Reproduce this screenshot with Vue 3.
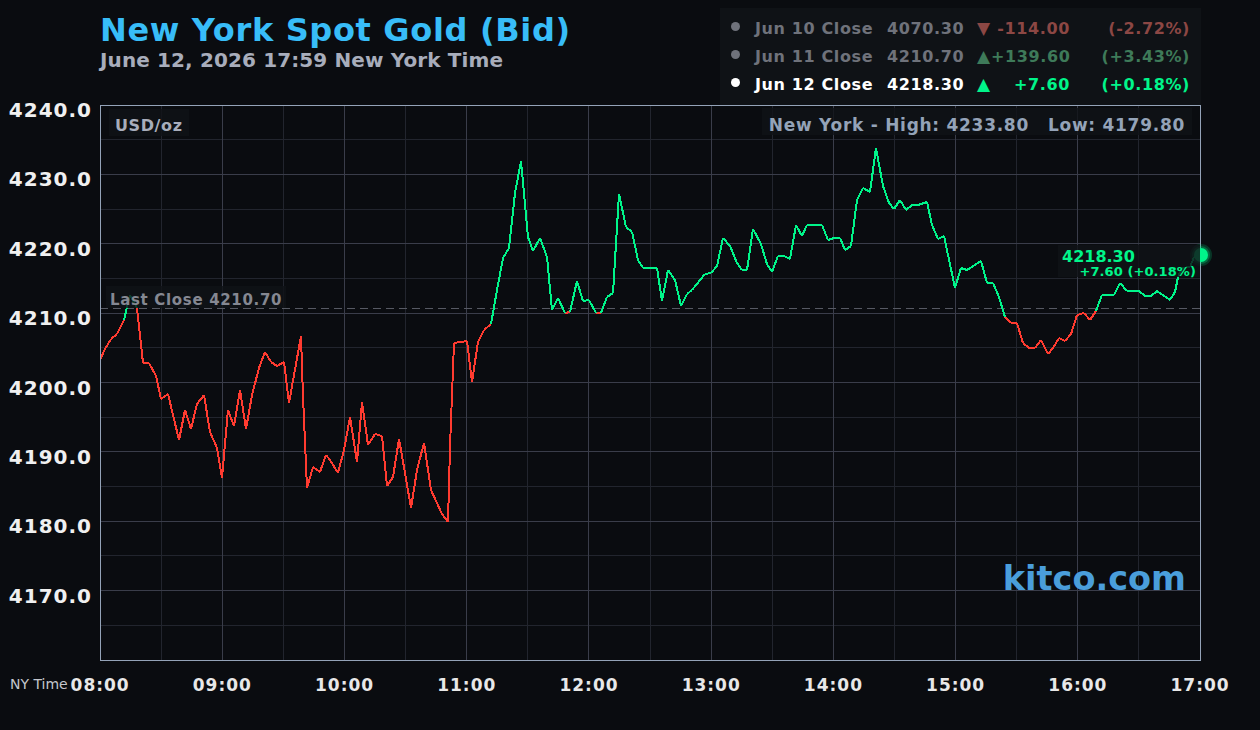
<template>
  <div class="page">
    <header class="head">
      <div class="titles">
        <h1>New York Spot Gold (Bid)</h1>
        <p>June 12, 2026 17:59 New York Time</p>
      </div>
      <div class="legend">
        <div v-for="row in closes" :key="row.day" class="legend-row" :class="{ current: row.current }">
          <i class="dot"></i>
          <span class="day">{{ row.day }} Close</span>
          <span class="price">{{ row.price }}</span>
          <span class="arrow" :class="row.up ? 'up' : 'down'">{{ row.up ? '▲' : '▼' }}</span>
          <span class="change" :class="row.up ? 'up' : 'down'">{{ row.change }}</span>
          <span class="pct" :class="row.up ? 'up' : 'down'">{{ row.pct }}</span>
        </div>
      </div>
    </header>

    <main class="chart">
      <div class="y-axis">
        <span v-for="t in yTicks" :key="t">{{ t }}</span>
      </div>
      <div class="plot">
        <svg class="canvas" viewBox="100 105 1101 556" width="1101" height="556">
          <line v-for="x in minorX" :key="'mx' + x" :x1="x" :x2="x" y1="105" y2="660" class="minor" />
          <line v-for="y in minorY" :key="'my' + y" x1="100" x2="1200" :y1="y" :y2="y" class="minor" />
          <line v-for="x in majorX" :key="'jx' + x" :x1="x" :x2="x" y1="105" y2="660" class="major" />
          <line v-for="y in majorY" :key="'jy' + y" x1="100" x2="1200" :y1="y" :y2="y" class="major" />
          <line x1="100" x2="1200" y1="308.5" y2="308.5" class="close-line" />
          <path :d="redPath" class="trace red" />
          <path :d="greenPath" class="trace green" />
          <rect x="100.5" y="105.5" width="1100" height="555" class="frame" />
        </svg>
        <span class="tag unit">USD/oz</span>
        <div class="tag range">
          <span>New York - High: 4233.80</span>
          <span>Low: 4179.80</span>
        </div>
        <span class="tag last">Last Close 4210.70</span>
        <svg class="marker" viewBox="0 0 24 24" width="24" height="24">
          <circle cx="12" cy="12" r="11" fill="#00f58a" opacity="0.18" />
          <circle cx="12" cy="12" r="9" fill="#00f58a" opacity="0.28" />
          <circle cx="12" cy="12" r="7" fill="#00f58a" />
        </svg>
        <div class="now">
          <b>4218.30</b>
          <small>+7.60 (+0.18%)</small>
        </div>
        <span class="brand">kitco.com</span>
      </div>
    </main>

    <footer class="x-axis">
      <span class="ny">NY Time</span>
      <span v-for="t in xTicks" :key="t">{{ t }}</span>
    </footer>
  </div>
</template>

<script setup>
import { computed } from 'vue'

const closes = [
  { day: 'Jun 10', price: '4070.30', change: '-114.00', pct: '(-2.72%)', up: false },
  { day: 'Jun 11', price: '4210.70', change: '+139.60', pct: '(+3.43%)', up: true },
  { day: 'Jun 12', price: '4218.30', change: '+7.60', pct: '(+0.18%)', up: true, current: true }
]

const yTicks = ['4240.0', '4230.0', '4220.0', '4210.0', '4200.0', '4190.0', '4180.0', '4170.0']
const xTicks = ['08:00', '09:00', '10:00', '11:00', '12:00', '13:00', '14:00', '15:00', '16:00', '17:00']

const hour = 1100 / 9
const priceStep = 555 / 16
const majorX = Array.from({ length: 8 }, (_, i) => Math.floor(100 + hour * (i + 1)) + 0.5)
const minorX = Array.from({ length: 9 }, (_, i) => Math.floor(100 + hour * (i + 0.5)) + 0.5)
const majorY = Array.from({ length: 7 }, (_, i) => Math.floor(105 + priceStep * (2 * i + 2)) + 0.5)
const minorY = Array.from({ length: 8 }, (_, i) => Math.floor(105 + priceStep * (2 * i + 1)) + 0.5)

// traced in page pixels, the chart viewBox uses the same numbers
const trace = [
  [100, 360], [105, 349], [111, 339], [117, 334], [124, 320], [127, 307], [130, 295], [137, 308],
  [143, 363], [149, 363], [156, 376], [161, 399], [168, 394], [179, 440], [185, 410], [191, 429],
  [197, 404], [204, 395], [210, 432], [217, 448], [222, 478], [228, 410], [234, 426], [240, 390],
  [246, 429], [252, 395], [259, 368], [265, 352], [271, 362], [277, 366], [284, 362], [289, 403],
  [301, 336], [303, 396], [307, 488], [313, 467], [320, 472], [326, 455], [330, 460], [338, 473],
  [344, 450], [350, 417], [357, 462], [362, 402], [368, 445], [375, 434], [382, 436], [387, 486],
  [393, 477], [399, 439], [405, 473], [411, 508], [417, 470], [424, 443], [431, 490], [442, 514],
  [448, 522], [450, 447], [454, 343], [467, 341], [472, 382], [478, 342], [484, 330], [491, 324],
  [497, 290], [503, 258], [509, 248], [515, 193], [521, 161], [528, 237], [533, 251], [540, 238],
  [547, 257], [552, 310], [558, 298], [565, 313], [570, 312], [577, 281], [583, 301], [589, 300],
  [596, 313], [601, 313], [607, 297], [613, 293], [619, 194], [626, 227], [632, 232], [638, 260],
  [643, 268], [657, 268], [662, 301], [668, 270], [675, 280], [681, 306], [687, 294], [692, 290],
  [705, 274], [711, 273], [717, 266], [723, 238], [730, 246], [737, 263], [742, 270], [747, 270],
  [753, 229], [761, 244], [767, 264], [772, 272], [778, 256], [784, 256], [790, 259], [796, 225],
  [802, 236], [807, 225], [822, 225], [828, 240], [834, 238], [840, 238], [845, 250], [851, 246],
  [857, 200], [863, 188], [870, 192], [876, 148], [883, 186], [889, 203], [894, 209], [900, 200],
  [906, 210], [912, 205], [918, 205], [927, 202], [932, 225], [938, 239], [944, 236], [955, 288],
  [961, 268], [967, 270], [981, 261], [987, 283], [993, 283], [999, 297], [1005, 317], [1011, 323],
  [1017, 323], [1023, 343], [1029, 348], [1035, 348], [1041, 340], [1048, 354], [1053, 348],
  [1059, 338], [1065, 341], [1071, 334], [1077, 315], [1084, 313], [1090, 320], [1096, 311],
  [1102, 295], [1114, 295], [1120, 283], [1127, 291], [1139, 291], [1145, 296], [1151, 296],
  [1157, 291], [1170, 300], [1175, 292], [1178, 277], [1182, 268], [1190, 267], [1194, 257], [1200, 255]
]

const closeY = 308

// red only when both ends of a segment sit under the last close
const isGreen = (a, b) => a[1] < closeY || b[1] < closeY

const pathFor = green =>
  trace
    .slice(1)
    .map((p, i) => (isGreen(trace[i], p) === green ? `M${trace[i][0]} ${trace[i][1]}L${p[0]} ${p[1]}` : ''))
    .join('')

const greenPath = computed(() => pathFor(true))
const redPath = computed(() => pathFor(false))
</script>

<style scoped>
.page {
  width: 1260px;
  height: 730px;
  position: relative;
  overflow: hidden;
  background: #0a0c10;
  font-family: "DejaVu Sans", sans-serif;
  font-weight: 700;
}
.head {
  height: 105px;
  display: flex;
  justify-content: space-between;
  padding: 8px 59px 0 100px;
  box-sizing: border-box;
}
.titles h1 {
  margin: 4px 0 0 0;
  font-size: 32px;
  line-height: 36px;
  letter-spacing: 0.67px;
  color: #38bdf8;
}
.titles p {
  margin: 0;
  font-size: 20px;
  line-height: 24px;
  letter-spacing: 0.12px;
  color: #a8adbb;
}
.legend {
  width: 481px;
  box-sizing: border-box;
  padding: 6px 0 0 11px;
  background: #0f1216;
}
.legend-row {
  display: flex;
  align-items: center;
  height: 28px;
  font-size: 16px;
  letter-spacing: 0.62px;
  color: #6f727b;
}
.legend-row .up {
  color: #3e7a59;
}
.legend-row .down {
  color: #8c4744;
}
.legend-row.current {
  color: #fff;
}
.legend-row.current .up {
  color: #00f58a;
}
.dot {
  width: 9px;
  height: 9px;
  margin-right: 15px;
  margin-top: -3px;
  border-radius: 50%;
  background: currentColor;
  flex: none;
}
.day {
  width: 132px;
  white-space: nowrap;
}
.price {
  width: 90px;
}
.arrow {
  width: 14px;
  font-size: 17px;
  letter-spacing: 0;
}
.change {
  width: 79px;
  text-align: right;
}
.pct {
  width: 120px;
  text-align: right;
}
.chart {
  display: flex;
  align-items: flex-start;
}
.y-axis {
  width: 100px;
  display: flex;
  flex-direction: column;
  align-items: flex-end;
  padding: 0 8px 0 0;
  box-sizing: border-box;
  font-size: 20px;
  letter-spacing: 1px;
  color: #f0f0f0;
}
.y-axis span {
  height: 69.375px;
  line-height: 10px;
}
.plot {
  position: relative;
  width: 1101px;
  height: 556px;
}
.canvas {
  display: block;
}
.minor {
  stroke: #22252e;
  stroke-width: 1;
}
.major {
  stroke: #3a3d4a;
  stroke-width: 1;
}
.close-line {
  stroke: #565963;
  stroke-width: 1;
  stroke-dasharray: 8 5;
}
.frame {
  fill: none;
  stroke: #94a3b8;
  stroke-width: 1;
}
.trace {
  fill: none;
  stroke-width: 2;
  shape-rendering: crispEdges;
}
.red {
  stroke: #ff3b30;
}
.green {
  stroke: #00f58a;
}
.tag {
  position: absolute;
  background: rgba(16, 18, 23, 0.82);
  height: 27px;
  line-height: 34px;
  padding: 0 7px;
  white-space: nowrap;
}
.unit {
  left: 9px;
  top: 4px;
  padding: 0 6px;
  font-size: 16px;
  letter-spacing: 0.6px;
  color: #a8adbb;
}
.range {
  right: 9px;
  top: 3px;
  display: flex;
  gap: 19px;
  font-size: 17px;
  letter-spacing: 0.72px;
  color: #94a3b8;
}
.last {
  left: 6px;
  top: 181px;
  height: 22px;
  line-height: 28px;
  padding: 0 4px;
  font-size: 15px;
  letter-spacing: 0.67px;
  color: #858892;
}
.marker {
  position: absolute;
  left: 1088.5px;
  top: 138px;
}
.now {
  position: absolute;
  left: 958px;
  top: 140px;
  width: 142px;
  height: 32px;
  box-sizing: border-box;
  padding: 4px 4px 0 4px;
  background: rgba(16, 18, 23, 0.82);
  color: #00f58a;
  display: flex;
  flex-direction: column;
}
.now b {
  font-size: 16px;
  line-height: 16px;
}
.now small {
  font-size: 13px;
  line-height: 13px;
  letter-spacing: 0.08px;
  align-self: flex-end;
  white-space: nowrap;
}
.brand {
  position: absolute;
  right: 15px;
  top: 454px;
  font-size: 33.5px;
  line-height: 40px;
  color: #4a9edb;
}
.x-axis {
  display: flex;
  padding-left: 39px;
  margin-top: 13px;
  font-size: 17px;
  line-height: 22px;
  letter-spacing: 1px;
  color: #e8e8e8;
}
.x-axis span {
  width: 122.22px;
  text-align: center;
  flex: none;
}
.x-axis .ny {
  position: absolute;
  left: 10px;
  width: auto;
  font-size: 14px;
  font-weight: 400;
  line-height: 20px;
  letter-spacing: 0;
  color: #c4c6cc;
}
</style>

<style>
body {
  background: #0a0c10;
}
</style>
